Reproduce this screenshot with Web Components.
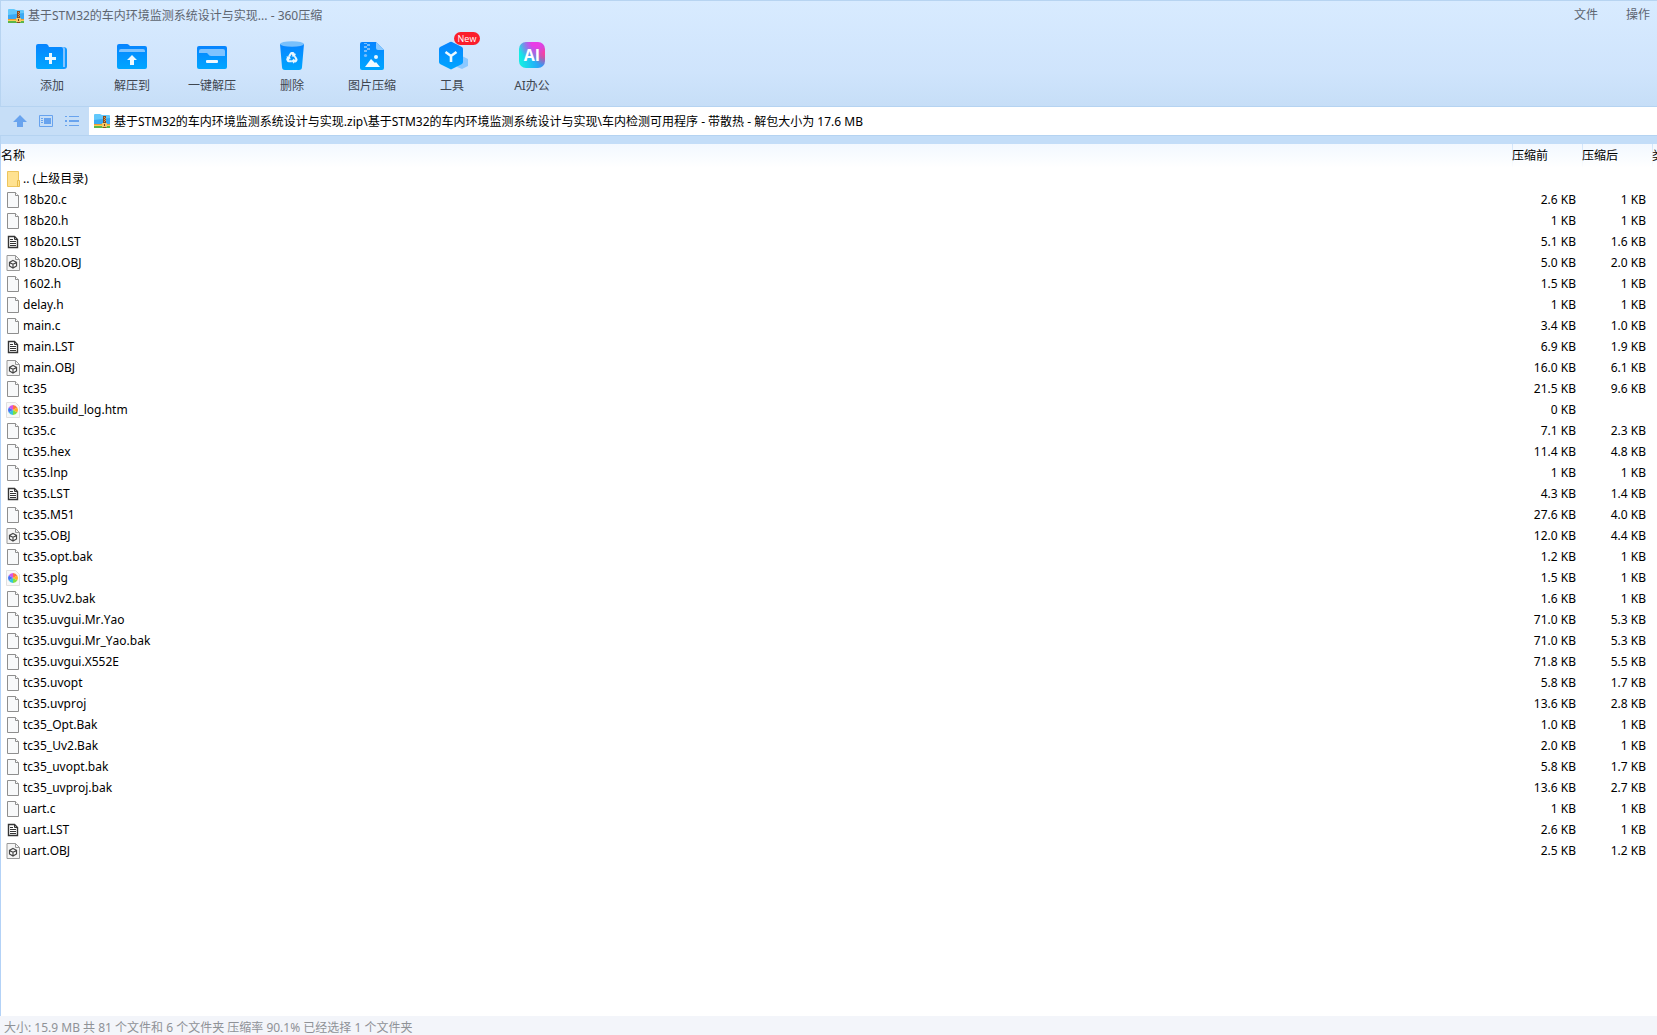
<!DOCTYPE html>
<html lang="zh-CN">
<head>
<meta charset="utf-8">
<title>360压缩</title>
<style>
html, body { margin: 0; height: 100%; }
body { font: 12px/16px "Noto Sans", "Noto Sans CJK SC", sans-serif; font-kerning: none; color: #000; overflow: hidden; }
</style>
</head>
<body>
<archive-window></archive-window>

<script>
const ICONS = {
  zip: `<svg viewBox="0 0 16 14" width="16" height="14"><path d="M0 1a1 1 0 0 1 1-1h5l2 1h7a1 1 0 0 1 1 1v8H0z" fill="#62c8fb"/><path d="M0 6 16 4v6H0z" fill="#3aa9f2"/><path d="M0 10h16v2H0z" fill="#f39a2e"/><path d="M0 11h16v1H0z" fill="#f6cf55"/><path d="M0 12h16v2H0z" fill="#5cb548"/><path d="M9 2h3v12H9z" fill="#8a4b1e"/><path d="M10 3h1v1h-1zM11 4h1v1h-1zM10 5h1v1h-1zM11 6h1v1h-1zM10 7h1v1h-1z" fill="#d59a58"/><path d="M8 9h5v4H8z" fill="#f3c766"/><path d="M10 10h1v2h-1z" fill="#704018"/></svg>`,
  add: `<svg viewBox="0 0 32 30" width="32" height="30"><path d="M4 6h23q4 0 4 3v16q0 3-3 3H4z" fill="#1299ff"/><path d="M17 6h10q2 0 2 2v18h-2V8H18z" fill="#85c4ff"/><path d="M0 5q0-2 2-2h8q1 0 2 1l1 2h12q2 0 2 2v18q0 2-2 2H2q-2 0-2-2z" fill="url(#b)"/><path d="M13 12h3v4h4v3h-4v4h-3v-4H9v-3h4z" fill="#e9f7ff"/></svg>`,
  extract: `<svg viewBox="0 0 32 30" width="32" height="30"><path d="M1 5q0-2 2-2h8q1 0 2 1l1 1h15q2 0 2 2v19q0 2-2 2H3q-2 0-2-2z" fill="url(#b)"/><path d="M3 11V10q0-2 2-2h22q2 0 2 2v1z" fill="#7fc3ff"/><path d="m16 14 5 5h-3v5h-4v-5h-3z" fill="#eef9ff"/></svg>`,
  quick: `<svg viewBox="0 0 32 30" width="32" height="30"><rect x="1" y="5" width="30" height="23" rx="2" fill="url(#b)"/><path d="M3 10q0-2 2-2h22q2 0 2 2v5H15q-2 0-3-2l-1-1H3z" fill="#7fc3ff"/><rect x="10" y="19" width="12" height="3" rx="1" fill="#eef9ff"/></svg>`,
  trash: `<svg viewBox="0 0 32 30" width="32" height="30"><path d="M4 3h24l-2 23q0 3-3 3H9q-3 0-3-3z" fill="url(#b)"/><ellipse cx="16" cy="3" rx="12" ry="2.800" fill="#79c0fc"/><g fill="#e9f7ff"><path id="r" d="M12.300 14.800 14 12q.6-.9 1.500-.9h1.500q.9 0 1.400.9l.6 1 1-.5-1.200 3.500-3.400-.8 1-.6-.8-1.400-1.400 2.500z"/><use href="#r" transform="rotate(120 16 17)"/><use href="#r" transform="rotate(240 16 17)"/></g></svg>`,
  picture: `<svg viewBox="0 0 32 30" width="32" height="30"><path d="M4 3q0-2 2-2h14l8 8v18q0 2-2 2H6q-2 0-2-2z" fill="url(#b)"/><path d="M20 1l8 8h-6q-2 0-2-2z" fill="#8bc9ff"/><path d="M8 2h3v1H8zM11 3h3v2h-3zM8 5h3v2H8zM11 7h3v2h-3zM8 9h3v2H8z" fill="#77bdfc"/><circle cx="9.500" cy="14.500" r="1.600" fill="#77bdfc"/><circle cx="20" cy="16" r="2" fill="#e9f7ff"/><path d="m9 26 6-8 4 4 1-1 4 5z" fill="#f3fbff"/></svg>`,
  tools: `<svg viewBox="0 0 32 30" width="32" height="30"><path d="m26 15 6 3v7l-6 3-5-2z" fill="#8bc8ff"/><path d="M14 1q1-.5 2 0l10 5q1 1 1 2v13q0 1-1 2l-10 5q-1 .8-2 0L4 23q-1-1-1-2V8q0-1 1-2z" fill="url(#b)"/><path d="m9.500 11 5.500 4 5.500-4M15 15v6" fill="none" stroke="#edf9ff" stroke-width="2.600"/></svg>`,
  up: `<svg viewBox="0 0 14 12" width="14" height="12"><path d="m7 0 7 7h-4v5H4V7H0z" fill="#68a3ee"/></svg>`,
  panel: `<svg viewBox="0 0 14 12" width="14" height="12"><path d="M.5.500h13v11H.5z" fill="none" stroke="#68a3ee"/><path d="M5 3h7v6H5zM2 3h2v1H2zM2 5h2v1H2zM2 7h2v1H2z" fill="#68a3ee"/></svg>`,
  list: `<svg viewBox="0 0 14 12" width="14" height="12"><path d="M0 1h2v1H0zM4 1h10v1H4zM0 5h2v2H0zM4 5h10v2H4zM0 10h2v1H0zM4 10h10v1H4z" fill="#68a3ee"/></svg>`,
  folder: `<svg viewBox="0 0 14 16" width="14" height="16"><path d="M1.500.500h11v15h-11z" fill="#ffe291" stroke="#edc55d"/><path d="M11.500 9.500h2v6h-2z" fill="#ffe291" stroke="#e8bd4c"/></svg>`,
  file: `<svg viewBox="0 0 14 16" width="14" height="16"><path d="M1.500.500h8l3 3v12h-11z" fill="#f8f9fa" stroke="#8e8e8e"/><path d="M9.500.500v3h3" fill="#fff" stroke="#8e8e8e"/></svg>`,
  text: `<svg viewBox="0 0 14 16" width="14" height="16"><path d="M2.500 2.500h6l3 3v8h-9z" fill="#fff" stroke="#353535" stroke-width="1.400"/><path d="M8.500 2.500v3h3M4 5.500h3M4 7.500h6M4 9.500h6M4 11.500h6" fill="none" stroke="#353535"/></svg>`,
  object: `<svg viewBox="0 0 14 16" width="14" height="16"><path d="M1 .500h8.500l4 4v11H1z" fill="#f5f5f5" stroke="#999"/><path d="M9.500.500v4h4" fill="none" stroke="#999"/><path d="m7 5.500 3.500 1.800v3.600L7 13l-3.500-2.100V7.300zM3.500 7.500 7 9.300l3.500-1.800M7 9.300V13" fill="#fff" stroke="#444" stroke-width="1.200"/></svg>`,
  web: `<svg viewBox="0 0 14 16" width="14" height="16"><path d="M.5.500h9l4 4v11H.5z" fill="#f8f8f8" stroke="#e0e0e0"/><g transform="translate(.5 0)"><path d="M6.500 8V3a5 5 0 0 0-4.300 2.500z" fill="#d456e8"/><path d="M6.500 8V3a5 5 0 0 1 4.300 2.500z" fill="#ff7446"/><path d="m6.500 8 4.300-2.500a5 5 0 0 1 0 5z" fill="#ffb122"/><path d="m6.500 8 4.300 2.500A5 5 0 0 1 6.500 13z" fill="#7ee043"/><path d="M6.500 8v5a5 5 0 0 1-4.300-2.500z" fill="#36c5dc"/><path d="m6.500 8-4.300 2.500a5 5 0 0 1 0-5z" fill="#4574f5"/></g></svg>`
};
const BLUE = `<svg width="0" height="0" style="position:absolute"><linearGradient id="b" x2="0" y2="1"><stop stop-color="#0784ff"/><stop offset="1" stop-color="#00a6ff"/></linearGradient></svg>`;

function define(name, render) {
  customElements.define(name, class extends HTMLElement {
    connectedCallback() {
      if (!this.shadowRoot) this.attachShadow({ mode: "open" }).innerHTML = render(this);
    }
  });
}

define("app-icon", el => `<style>:host{display:inline-flex;flex:none}svg{display:block}</style>${BLUE}${ICONS[el.getAttribute("name")]}`);

define("ai-logo", () => `<style>
:host{display:grid;place-items:center;width:26px;height:26px;border-radius:7px;font:bold 16px/20px "Open Sans",sans-serif;color:#fff;
background:radial-gradient(circle at 65% 0,#e83de6 15%,#e83de600 60%),radial-gradient(circle at 100% 40%,#ff437f 5%,#ff437f00 45%),linear-gradient(80deg,#16ebe3 10%,#20b8f5 50%,#4b77f5)}
</style><slot></slot>`);

define("title-bar", () => `<style>
:host{display:flex;align-items:center;height:30px;padding:0 7px;color:#5d6570;gap:4px}
h1{font:inherit;margin:0;flex:1}
nav{display:flex;gap:28px;height:20px}
button{font:inherit;color:inherit;background:none;border:0;padding:0;height:18px}
</style><app-icon name="zip"></app-icon><h1><slot></slot></h1><nav><button>文件</button><button>操作</button></nav>`);

define("tool-button", el => `<style>
:host{display:block;width:80px}
button{position:relative;width:100%;height:60px;border:0;padding:0;background:none;font:inherit;color:#3f4650;display:flex;flex-direction:column;align-items:center;gap:7px}
.pic{height:30px;display:flex}
::slotted(ai-logo){margin-top:1px}
.badge{position:absolute;left:42px;top:-9px;width:26px;height:13px;border-radius:7px;background:#fb1e2b;color:#fff;font:9px/13px "Open Sans",sans-serif;text-align:center}
</style><button><span class="pic"><slot name="icon"></slot></span><span><slot></slot></span>${el.hasAttribute("badge") ? `<span class="badge">${el.getAttribute("badge")}</span>` : ""}</button>`);

define("tool-bar", () => `<style>:host{display:flex;box-sizing:border-box;height:75px;padding:10px 11px 0}</style><slot></slot>`);

define("address-bar", () => `<style>
:host{display:flex;align-items:center;height:28px;padding-left:13px;border-block:1px solid #b5d3f1;background:#c6def7}
nav{display:flex;gap:12px;width:76px}
button{border:0;padding:0;background:none;display:flex}
.path{flex:1;height:28px;box-sizing:border-box;background:#fff;display:flex;align-items:center;gap:4px;padding-left:5px}
input{flex:1;border:0;padding:1px 0 0;outline:0;font:inherit;font-kerning:none;color:#000;background:none}
</style><nav><button aria-label="上一级"><app-icon name="up"></app-icon></button><button aria-label="面板"><app-icon name="panel"></app-icon></button><button aria-label="列表"><app-icon name="list"></app-icon></button></nav>
<div class="path"><app-icon name="zip"></app-icon><input aria-label="路径" value="基于STM32的车内环境监测系统设计与实现.zip\\基于STM32的车内环境监测系统设计与实现\\车内检测可用程序 - 带散热 - 解包大小为 17.6 MB"></div>`);

const FILES = `folder|.. (上级目录)||
file|18b20.c|2.6 KB|1 KB
file|18b20.h|1 KB|1 KB
text|18b20.LST|5.1 KB|1.6 KB
object|18b20.OBJ|5.0 KB|2.0 KB
file|1602.h|1.5 KB|1 KB
file|delay.h|1 KB|1 KB
file|main.c|3.4 KB|1.0 KB
text|main.LST|6.9 KB|1.9 KB
object|main.OBJ|16.0 KB|6.1 KB
file|tc35|21.5 KB|9.6 KB
web|tc35.build_log.htm|0 KB|
file|tc35.c|7.1 KB|2.3 KB
file|tc35.hex|11.4 KB|4.8 KB
file|tc35.lnp|1 KB|1 KB
text|tc35.LST|4.3 KB|1.4 KB
file|tc35.M51|27.6 KB|4.0 KB
object|tc35.OBJ|12.0 KB|4.4 KB
file|tc35.opt.bak|1.2 KB|1 KB
web|tc35.plg|1.5 KB|1 KB
file|tc35.Uv2.bak|1.6 KB|1 KB
file|tc35.uvgui.Mr.Yao|71.0 KB|5.3 KB
file|tc35.uvgui.Mr_Yao.bak|71.0 KB|5.3 KB
file|tc35.uvgui.X552E|71.8 KB|5.5 KB
file|tc35.uvopt|5.8 KB|1.7 KB
file|tc35.uvproj|13.6 KB|2.8 KB
file|tc35_Opt.Bak|1.0 KB|1 KB
file|tc35_Uv2.Bak|2.0 KB|1 KB
file|tc35_uvopt.bak|5.8 KB|1.7 KB
file|tc35_uvproj.bak|13.6 KB|2.7 KB
file|uart.c|1 KB|1 KB
text|uart.LST|2.6 KB|1 KB
object|uart.OBJ|2.5 KB|1.2 KB`.split("\n").map(line => line.split("|"));

define("file-list", () => `<style>
:host{display:block;flex:1;min-height:0;overflow:hidden;background:#fff}
table{width:100%;table-layout:fixed;border-collapse:collapse}
col.size{width:70px} col.type{width:5px}
th,td{padding:0;font-weight:normal;white-space:nowrap;overflow:hidden}
th{height:24px;text-align:left;background:linear-gradient(#f2f8ff,#fff)}
th+th{background:linear-gradient(#cfe4fa,#fff) left/1px 100% no-repeat,linear-gradient(#f2f8ff,#fff)}
td{height:21px;text-align:right;padding-right:6px}
td:first-child{text-align:left;padding-left:5px}
td:last-child{padding:0}
.name{display:flex;align-items:center;gap:3px;height:21px}
</style><table><colgroup><col><col class="size"><col class="size"><col class="type"></colgroup>
<thead><tr><th>名称</th><th>压缩前</th><th>压缩后</th><th>类型</th></tr></thead>
<tbody>${FILES.map(([icon, name, before, after]) => `<tr><td><span class="name"><app-icon name="${icon}"></app-icon><span>${name}</span></span></td><td>${before}</td><td>${after}</td><td></td></tr>`).join("")}</tbody></table>`);

define("status-bar", () => `<style>:host{display:block;padding:4px 4px 0;height:15px;background:#f3f5fa;color:#8f9297;white-space:nowrap}</style><slot></slot>`);

define("archive-window", () => `<style>
:host{display:flex;flex-direction:column;height:100vh;box-sizing:border-box;border-top:1px solid #b7d4f1}
header{background:linear-gradient(#d8ebff,#cfe4fc 50%,#c6def7 74%);border-left:1px solid #b7d4f1}
.strip{height:8px;background:#c3ddf8}
file-list{border-left:1px solid #b3d2f7}
address-bar{margin-left:-1px}
</style>
<header><title-bar>基于STM32的车内环境监测系统设计与实现... - 360压缩</title-bar>
<tool-bar>
<tool-button><app-icon slot="icon" name="add"></app-icon>添加</tool-button>
<tool-button><app-icon slot="icon" name="extract"></app-icon>解压到</tool-button>
<tool-button><app-icon slot="icon" name="quick"></app-icon>一键解压</tool-button>
<tool-button><app-icon slot="icon" name="trash"></app-icon>删除</tool-button>
<tool-button><app-icon slot="icon" name="picture"></app-icon>图片压缩</tool-button>
<tool-button badge="New"><app-icon slot="icon" name="tools"></app-icon>工具</tool-button>
<tool-button><ai-logo slot="icon">AI</ai-logo>AI办公</tool-button>
</tool-bar><address-bar></address-bar><div class="strip"></div></header>
<file-list></file-list>
<status-bar>大小: 15.9 MB 共 81 个文件和 6 个文件夹 压缩率 90.1% 已经选择 1 个文件夹</status-bar>`);
</script>
</body>
</html>
